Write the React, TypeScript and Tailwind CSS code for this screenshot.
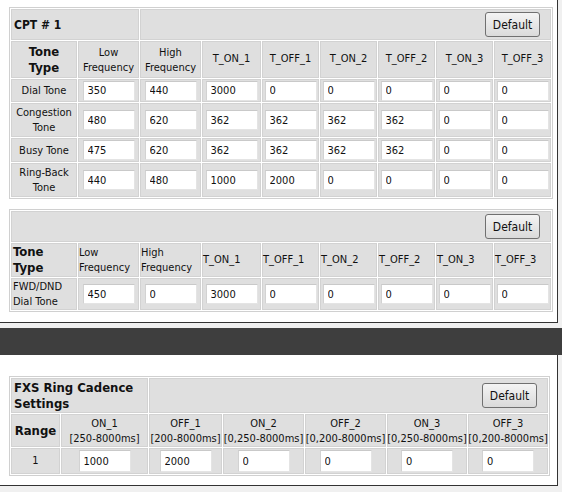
import React from "react";

const font = { fontFamily: '"DejaVu Sans Condensed", "DejaVu Sans", sans-serif' };

function DefaultButton() {
  return (
    <button
      type="button"
      className="h-[25px] w-[55px] rounded-[3px] border border-[#707070] bg-gradient-to-b from-[#f4f4f4] to-[#dadada] text-[12px] text-[#111] leading-none"
    >
      Default
    </button>
  );
}

function Field({ value, wide = false }: { value: string; wide?: boolean }) {
  return (
    <input
      readOnly
      value={value}
      className={`${wide ? "h-[22px]" : "h-[20px]"} w-[52px] border border-[#e4e4e4] border-t-[#c9c9c9] border-l-[#d2d2d2] bg-white pl-[4px] text-[11px] text-[#111] outline-none`}
    />
  );
}

// cell look: grey fill with a faint edge, white spacing between cells
const cell = "bg-[#dfdfdf] p-0 shadow-[inset_0_0_0_1px_#d2d2d2]";
const tableCls =
  "table-fixed w-[541px] border-separate border-spacing-[1px] border border-[#d0d0d0] bg-white text-[11px] text-[#111]";

const cptCols = [66, 61, 61, 59, 57, 57, 57, 57, 57];
const toneHeaders = ["T_ON_1", "T_OFF_1", "T_ON_2", "T_OFF_2", "T_ON_3", "T_OFF_3"];

const cptRows: { name: string[]; h: string; values: string[] }[] = [
  { name: ["Dial Tone"], h: "h-[23px]", values: ["350", "440", "3000", "0", "0", "0", "0", "0"] },
  { name: ["Congestion", "Tone"], h: "h-[34px]", values: ["480", "620", "362", "362", "362", "362", "0", "0"] },
  { name: ["Busy Tone"], h: "h-[24px]", values: ["475", "620", "362", "362", "362", "362", "0", "0"] },
  { name: ["Ring-Back", "Tone"], h: "h-[34px]", values: ["440", "480", "1000", "2000", "0", "0", "0", "0"] },
];

function Cols({ widths }: { widths: number[] }) {
  return (
    <colgroup>
      {widths.map((w, i) => (
        <col key={i} style={{ width: w }} />
      ))}
    </colgroup>
  );
}

function CptTable() {
  return (
    <table className={tableCls}>
      <Cols widths={cptCols} />
      <tbody>
        <tr className="h-[31px]">
          <td colSpan={2} className={`${cell} pl-[3px] text-[12px] font-bold`}>
            CPT # 1
          </td>
          <td colSpan={7} className={`${cell} pr-[11px]`}>
            <div className="flex justify-end">
              <DefaultButton />
            </div>
          </td>
        </tr>
        <tr className="h-[37px] text-center">
          <td className={`${cell} text-[13px] font-bold leading-[16px]`}>
            Tone
            <br />
            Type
          </td>
          <td className={`${cell} leading-[15px]`}>
            Low
            <br />
            Frequency
          </td>
          <td className={`${cell} leading-[15px]`}>
            High
            <br />
            Frequency
          </td>
          {toneHeaders.map((t) => (
            <td key={t} className={cell}>
              {t}
            </td>
          ))}
        </tr>
        {cptRows.map((r) => (
          <tr key={r.name.join(" ")} className={r.h}>
            <td className={`${cell} text-center leading-[15px]`}>
              {r.name.map((n, i) => (
                <div key={i}>{n}</div>
              ))}
            </td>
            {r.values.map((v, i) => (
              <td key={i} className={`${cell} text-center`}>
                <Field value={v} />
              </td>
            ))}
          </tr>
        ))}
      </tbody>
    </table>
  );
}

function FwdTable() {
  return (
    <table className={tableCls}>
      <Cols widths={cptCols} />
      <tbody>
        <tr className="h-[31px]">
          <td colSpan={9} className={`${cell} pr-[11px]`}>
            <div className="flex justify-end">
              <DefaultButton />
            </div>
          </td>
        </tr>
        <tr className="h-[34px] text-left">
          <td className={`${cell} pl-[2px] text-[13px] font-bold leading-[16px]`}>
            Tone
            <br />
            Type
          </td>
          <td className={`${cell} pl-[1px] leading-[15px]`}>
            Low
            <br />
            Frequency
          </td>
          <td className={`${cell} pl-[1px] leading-[15px]`}>
            High
            <br />
            Frequency
          </td>
          {toneHeaders.map((t) => (
            <td key={t} className={`${cell} pl-[1px]`}>
              {t}
            </td>
          ))}
        </tr>
        <tr className="h-[32px]">
          <td className={`${cell} pl-[2px] leading-[15px]`}>
            FWD/DND
            <br />
            Dial Tone
          </td>
          {["450", "0", "3000", "0", "0", "0", "0", "0"].map((v, i) => (
            <td key={i} className={`${cell} text-center`}>
              <Field value={v} />
            </td>
          ))}
        </tr>
      </tbody>
    </table>
  );
}

const ringCols = [49, 87, 73, 81, 81, 80, 80];
const ringHeaders = [
  ["ON_1", "[250-8000ms]"],
  ["OFF_1", "[200-8000ms]"],
  ["ON_2", "[0,250-8000ms]"],
  ["OFF_2", "[0,200-8000ms]"],
  ["ON_3", "[0,250-8000ms]"],
  ["OFF_3", "[0,200-8000ms]"],
];

function RingTable() {
  return (
    <table className={tableCls}>
      <Cols widths={ringCols} />
      <tbody>
        <tr className="h-[35px]">
          <td colSpan={2} className={`${cell} pl-[3px] text-[13px] font-bold leading-[16px]`}>
            FXS Ring Cadence
            <br />
            Settings
          </td>
          <td colSpan={5} className={`${cell} pr-[11px]`}>
            <div className="flex justify-end">
              <DefaultButton />
            </div>
          </td>
        </tr>
        <tr className="h-[33px] text-center">
          <td className={`${cell} text-[13px] font-bold`}>Range</td>
          {ringHeaders.map(([a, b]) => (
            <td key={a} className={`${cell} leading-[15px] whitespace-nowrap`}>
              {a}
              <br />
              {b}
            </td>
          ))}
        </tr>
        <tr className="h-[26px]">
          <td className={`${cell} text-center`}>1</td>
          {["1000", "2000", "0", "0", "0", "0"].map((v, i) => (
            <td key={i} className={`${cell} text-center`}>
              <Field value={v} wide />
            </td>
          ))}
        </tr>
      </tbody>
    </table>
  );
}

export default function App() {
  return (
    <div style={font} className="h-[492px] w-[562px] overflow-hidden bg-[#f0f0f0]">
      <div className="w-[558px] border-r border-b border-[#333] bg-white pt-[7px] pb-[10px] pl-[9px]">
        <CptTable />
        <div className="h-[10px]" />
        <FwdTable />
      </div>
      <div className="h-[5px]" />
      <div className="h-[27px] bg-[#3e3e3e]" />
      <div className="w-[558px] border-r border-b border-[#333] bg-white pt-[21px] pb-[9px] pl-[9px]">
        <RingTable />
      </div>
    </div>
  );
}
